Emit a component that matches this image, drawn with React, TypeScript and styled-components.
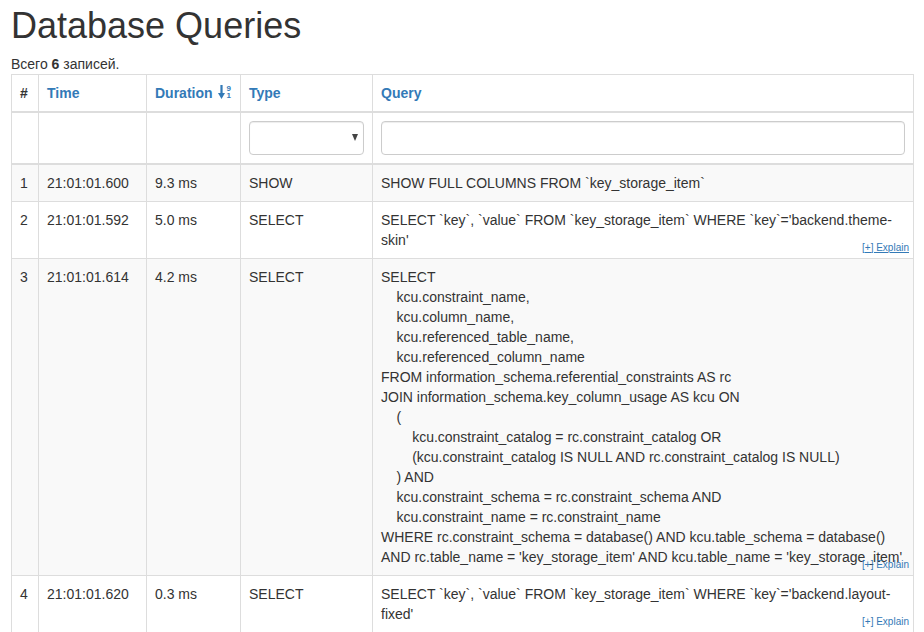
import React from "react";
import styled, { createGlobalStyle } from "styled-components";

const GlobalStyle = createGlobalStyle`
  html, body { margin: 0; padding: 0; background: #fff; }
  body {
    font-family: "Liberation Sans", Arial, Helvetica, sans-serif;
    font-size: 14px;
    line-height: 20px;
    color: #333;
  }
  * { box-sizing: border-box; }
`;

const Page = styled.div`
  padding: 0 11px;
`;

const Title = styled.h1`
  margin: 6px 0 8px;
  font-size: 36px;
  font-weight: 500;
  line-height: 1.1;
  color: #333;
`;

const Summary = styled.div`
  font-size: 14px;
  line-height: 20px;
  b { font-weight: 700; }
`;

const Table = styled.table`
  width: 100%;
  border-collapse: collapse;
  border-spacing: 0;
  table-layout: fixed;
  border: 1px solid #ddd;
`;

const HeadCell = styled.th`
  padding: 8px;
  text-align: left;
  vertical-align: bottom;
  font-weight: 700;
  border: 1px solid #ddd;
  border-bottom-width: 2px;
  line-height: 20px;
  white-space: nowrap;
`;

const SortLink = styled.a`
  color: #337ab7;
  text-decoration: none;
  display: inline-flex;
  align-items: center;
  gap: 5px;
`;

const SortIcon = styled.span`
  display: inline-flex;
  align-items: flex-start;
  height: 14px;
  margin-top: -1px;
`;

const Digits = styled.span`
  display: inline-flex;
  flex-direction: column;
  font-size: 8px;
  line-height: 7px;
  font-weight: 700;
  margin-left: 2px;
`;

const FilterCell = styled.td`
  padding: 8px;
  border: 1px solid #ddd;
  border-bottom-width: 2px;
  vertical-align: top;
  height: 50px;
`;

const SelectWrap = styled.div`
  position: relative;
  height: 34px;
`;

const Select = styled.select`
  appearance: none;
  -webkit-appearance: none;
  width: 100%;
  height: 34px;
  border: 1px solid #ccc;
  border-radius: 4px;
  background: #fff;
  box-shadow: inset 0 1px 1px rgba(0, 0, 0, 0.075);
  font: inherit;
  padding: 6px 12px;
`;

const Caret = styled.span`
  position: absolute;
  right: 6px;
  top: 13px;
  width: 0;
  height: 0;
  border-left: 3.5px solid transparent;
  border-right: 3.5px solid transparent;
  border-top: 7px solid #444;
  pointer-events: none;
`;

const TextInput = styled.input`
  display: block;
  width: 100%;
  height: 34px;
  border: 1px solid #ccc;
  border-radius: 4px;
  background: #fff;
  box-shadow: inset 0 1px 1px rgba(0, 0, 0, 0.075);
  font: inherit;
  padding: 6px 12px;
`;

const Row = styled.tr`
  &:nth-child(odd) { background: #f9f9f9; }
`;

const Cell = styled.td`
  padding: 8px;
  border: 1px solid #ddd;
  vertical-align: top;
  line-height: 20px;
`;

const QueryCell = styled(Cell)`
  position: relative;
  white-space: pre-wrap;
  word-wrap: break-word;
`;

const Explain = styled.a<{ $underline?: boolean }>`
  position: absolute;
  right: 4px;
  bottom: 4px;
  font-size: 10px;
  line-height: 12px;
  color: #337ab7;
  text-decoration: ${(p) => (p.$underline ? "underline" : "none")};
  white-space: nowrap;
`;

const Col = styled.col<{ $w: number }>`
  width: ${(p) => p.$w}px;
`;

type Q = {
  n: number;
  time: string;
  duration: string;
  type: string;
  query: string;
  explain: boolean;
  underline?: boolean;
};

const bigQuery = [
  "SELECT",
  "    kcu.constraint_name,",
  "    kcu.column_name,",
  "    kcu.referenced_table_name,",
  "    kcu.referenced_column_name",
  "FROM information_schema.referential_constraints AS rc",
  "JOIN information_schema.key_column_usage AS kcu ON",
  "    (",
  "        kcu.constraint_catalog = rc.constraint_catalog OR",
  "        (kcu.constraint_catalog IS NULL AND rc.constraint_catalog IS NULL)",
  "    ) AND",
  "    kcu.constraint_schema = rc.constraint_schema AND",
  "    kcu.constraint_name = rc.constraint_name",
  "WHERE rc.constraint_schema = database() AND kcu.table_schema = database()",
  "AND rc.table_name = 'key_storage_item' AND kcu.table_name = 'key_storage_item'",
].join("\n");

const rows: Q[] = [
  { n: 1, time: "21:01:01.600", duration: "9.3 ms", type: "SHOW", query: "SHOW FULL COLUMNS FROM `key_storage_item`", explain: false },
  { n: 2, time: "21:01:01.592", duration: "5.0 ms", type: "SELECT", query: "SELECT `key`, `value` FROM `key_storage_item` WHERE `key`='backend.theme-skin'", explain: true, underline: true },
  { n: 3, time: "21:01:01.614", duration: "4.2 ms", type: "SELECT", query: bigQuery, explain: true },
  { n: 4, time: "21:01:01.620", duration: "0.3 ms", type: "SELECT", query: "SELECT `key`, `value` FROM `key_storage_item` WHERE `key`='backend.layout-fixed'", explain: true },
];

function SortByOrderAlt() {
  return (
    <SortIcon>
      <svg width="7" height="14" viewBox="0 0 7 14" aria-hidden="true">
        <rect x="2.4" y="0" width="2.2" height="9" fill="#337ab7" />
        <path d="M0 8 L7 8 L3.5 14 Z" fill="#337ab7" />
      </svg>
      <Digits>
        <span>9</span>
        <span>1</span>
      </Digits>
    </SortIcon>
  );
}

export default function App() {
  return (
    <>
      <GlobalStyle />
      <Page>
        <Title>Database Queries</Title>
        <Summary>
          Всего <b>6</b> записей.
        </Summary>
        <Table>
          <colgroup>
            <Col $w={27} />
            <Col $w={108} />
            <Col $w={94} />
            <Col $w={132} />
            <Col $w={541} />
          </colgroup>
          <thead>
            <tr>
              <HeadCell>#</HeadCell>
              <HeadCell>
                <SortLink href="#">Time</SortLink>
              </HeadCell>
              <HeadCell>
                <SortLink href="#">
                  Duration
                  <SortByOrderAlt />
                </SortLink>
              </HeadCell>
              <HeadCell>
                <SortLink href="#">Type</SortLink>
              </HeadCell>
              <HeadCell>
                <SortLink href="#">Query</SortLink>
              </HeadCell>
            </tr>
            <tr>
              <FilterCell />
              <FilterCell />
              <FilterCell />
              <FilterCell>
                <SelectWrap>
                  <Select defaultValue="">
                    <option value=""></option>
                    <option value="SHOW">SHOW</option>
                    <option value="SELECT">SELECT</option>
                  </Select>
                  <Caret />
                </SelectWrap>
              </FilterCell>
              <FilterCell>
                <TextInput type="text" />
              </FilterCell>
            </tr>
          </thead>
          <tbody>
            {rows.map((r) => (
              <Row key={r.n}>
                <Cell>{r.n}</Cell>
                <Cell>{r.time}</Cell>
                <Cell>{r.duration}</Cell>
                <Cell>{r.type}</Cell>
                <QueryCell>
                  {r.query}
                  {r.explain && (
                    <Explain href="#" $underline={r.underline}>
                      [+] Explain
                    </Explain>
                  )}
                </QueryCell>
              </Row>
            ))}
          </tbody>
        </Table>
      </Page>
    </>
  );
}
